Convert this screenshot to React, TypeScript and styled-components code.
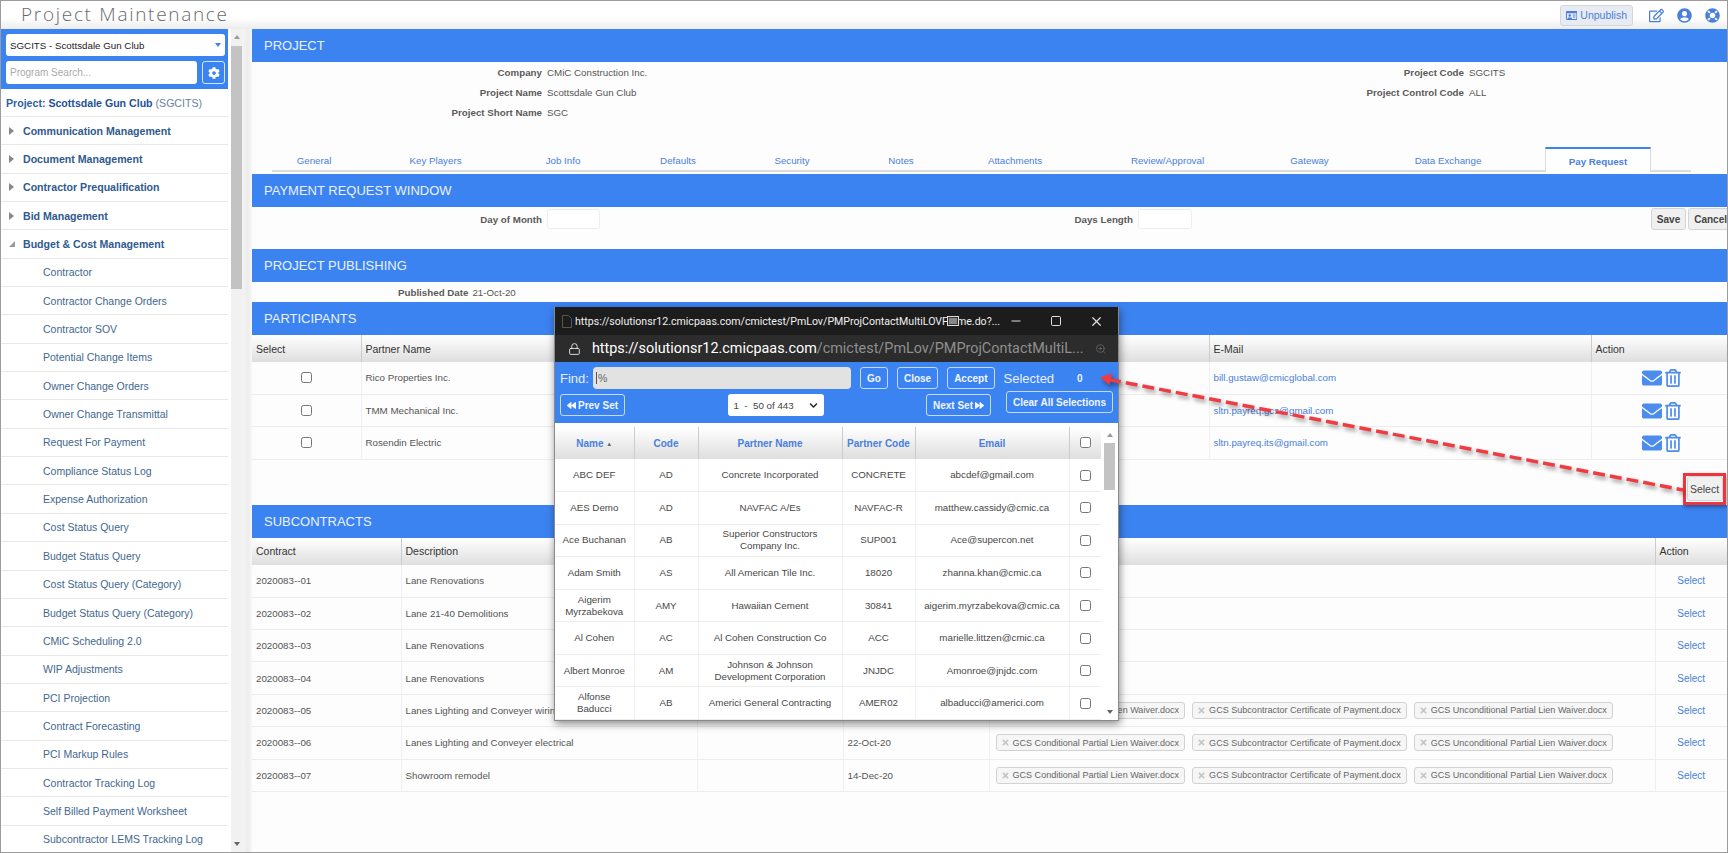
import * as React from 'react'
import styled, { createGlobalStyle } from 'styled-components'
import { FaCog, FaEnvelope, FaForward, FaBackward, FaLifeRing, FaRegEdit, FaRegIdCard, FaRegTrashAlt, FaTimes, FaUserCircle, FaChevronDown } from 'react-icons/fa'
import { Lock, Minus, Square, X, ZoomIn } from 'lucide-react'

const blue = '#3c83f2'
const link = '#4a80dc'

const Global = createGlobalStyle`
  html, body { margin: 0; padding: 0; background: #fff; }
  body { font-family: "Liberation Sans", Arial, sans-serif; font-size: 9.75px; color: #444; }
  * { box-sizing: border-box; }
`

const Page = styled.div`
  position: relative;
  width: 1728px;
  height: 853px;
  overflow: hidden;
  display: flex;
  flex-direction: column;
  border: 1px solid #9c9c9c;
  background: #fff;
`
const TopBar = styled.header`
  flex: 0 0 28px;
  display: flex;
  align-items: center;
  padding: 0 1px 0 20px;
  background: linear-gradient(#fff 60%, #ececec);
`
const Title = styled.h1`
  flex: 1;
  margin: 0 0 2px;
  font: 300 19px "Open Sans", sans-serif;
  letter-spacing: 1.7px;
  color: #6a6a6a;
`
const Unpublish = styled.button`
  display: flex;
  align-items: center;
  gap: 3px;
  width: 73px;
  height: 21px;
  margin-right: 9px;
  padding: 0 5px;
  border: 1px solid #d2d6de;
  border-radius: 3px;
  background: #e8ebf2;
  color: ${link};
  font: 10.5px "Liberation Sans", sans-serif;
`
const TopIcon = styled.span`
  display: flex;
  width: 28px;
  justify-content: center;
  color: ${link};
  font-size: 15px;
`
const Body = styled.div`
  flex: 1;
  display: flex;
  min-height: 0;
`
const Side = styled.aside`
  flex: 0 0 227px;
  display: flex;
  flex-direction: column;
  overflow: hidden;
`
const SideHead = styled.div`
  flex: 0 0 60px;
  display: flex;
  flex-direction: column;
  gap: 5px;
  padding: 5px 3px 0 5px;
  background: ${blue};
`
const ProjectSelect = styled.div`
  display: flex;
  align-items: center;
  justify-content: space-between;
  height: 22px;
  padding: 0 4px;
  border-radius: 3px;
  background: #fff;
  color: #222;
`
const Caret = styled.span`
  border-left: 3.5px solid transparent;
  border-right: 3.5px solid transparent;
  border-top: 4px solid ${blue};
`
const SearchRow = styled.div`
  display: flex;
  justify-content: space-between;
`
const Search = styled.input`
  width: 191px;
  height: 23px;
  padding: 0 4px;
  border: 0;
  border-radius: 3px;
  font: 10px "Liberation Sans", sans-serif;
  &::placeholder { color: #aaa; }
`
const Gear = styled.span`
  display: flex;
  align-items: center;
  justify-content: center;
  width: 23px;
  height: 23px;
  border: 1px solid #d5e4fc;
  border-radius: 3px;
  color: #fff;
  font-size: 12px;
`
const ProjectLine = styled.div`
  flex: 0 0 28px;
  padding: 8px 0 0 5px;
  border-bottom: 1px solid #e8e8e8;
  font-size: 10.6px;
  font-weight: bold;
  color: #2f5f9e;
  b { color: #1f5296; }
  span { color: #6b7f9c; font-weight: normal; }
`
const NavGroup = styled.div`
  flex: 0 0 28.35px;
  display: flex;
  align-items: center;
  gap: 8px;
  padding-left: 8px;
  border-bottom: 1px solid #e8e8e8;
  font-size: 10.6px;
  font-weight: bold;
  color: #2f5a90;
`
const Tri = styled.i<{ $open?: boolean }>`
  width: 0;
  height: 0;
  ${p => p.$open
    ? 'border-left: 6px solid transparent; border-bottom: 6px solid #999;'
    : 'border-left: 5px solid #888; border-top: 4px solid transparent; border-bottom: 4px solid transparent; margin-right: 1px;'}
`
const NavItem = styled.div`
  flex: 0 0 28.35px;
  display: flex;
  align-items: center;
  padding-left: 42px;
  border-bottom: 1px solid #e8e8e8;
  font-size: 10.5px;
  color: #3f678f;
`
const ScrollTrack = styled.div`
  flex: 0 0 14px;
  position: relative;
  padding: 17px 0 0 3px;
  background: linear-gradient(90deg, #fff 3px, #f1f1f1 3px);
`
const Thumb = styled.div`
  width: 11px;
  height: 243px;
  background: #c3c3c3;
`
const Arrow = styled.i<{ $down?: boolean; $x: number }>`
  position: absolute;
  left: ${p => p.$x}px;
  ${p => (p.$down ? 'bottom: 6px;' : 'top: 6px;')}
  border-left: 3.5px solid transparent;
  border-right: 3.5px solid transparent;
  ${p => (p.$down ? 'border-top: 4px solid #666;' : 'border-bottom: 4px solid #999;')}
`
const Gutter = styled.div`
  flex: 0 0 10px;
  background: linear-gradient(90deg, #f4f4f4, #ececec 60%, #f8f8f8);
`
const Main = styled.main`
  flex: 1;
  min-width: 0;
  overflow: hidden;
  background: #fdfdfd;
`
const Bar = styled.h2`
  height: 33px;
  margin: 0;
  padding: 0 12px;
  background: ${blue};
  color: #eaf2ff;
  font: 13px/33px "Liberation Sans", sans-serif;
  text-transform: uppercase;
`
const Form = styled.div`
  display: grid;
  grid-template-columns: 290px 622px 290px 1fr;
  grid-auto-rows: 20px;
  column-gap: 5px;
  align-items: center;
  height: 85px;
`
const Label = styled.span`
  text-align: right;
  font-weight: bold;
  color: #5a5a5a;
`
const Value = styled.span`
  color: #555;
`
const Tabs = styled.nav`
  display: grid;
  grid-template-columns: 84px 159px 96px 134px 94px 124px 104px 201px 83px 194px 106px;
  height: 25px;
  margin: 0 36px 2px 20px;
  border-bottom: 2px solid #dcdcdc;
`
const Tab = styled.a<{ $active?: boolean }>`
  display: flex;
  align-items: center;
  justify-content: center;
  height: 25px;
  padding-top: 2px;
  color: ${link};
  ${p => p.$active && `
    font-weight: bold;
    background: #fff;
    border: 1px solid #dcdcdc;
    border-top: 2px solid ${blue};
    border-bottom: 0;
  `}
`
const PayRow = styled.div`
  display: grid;
  grid-template-columns: 290px 53px 528px 54px 1fr;
  column-gap: 5px;
  align-items: center;
  height: 42px;
  padding-bottom: 18px;
`
const SmallInput = styled.div`
  height: 20px;
  border: 1px solid #eee;
  border-radius: 3px;
  background: #fff;
`
const Actions = styled.div`
  display: flex;
  justify-content: flex-end;
  gap: 2px;
  margin-right: -6px;
`
const GrayButton = styled.button`
  height: 22px;
  padding: 0 5px;
  border: 1px solid #d4d4d4;
  border-radius: 3px;
  background: #f0f0f0;
  color: #444;
  font: bold 10px "Liberation Sans", sans-serif;
`
const Published = styled.div`
  display: flex;
  align-items: center;
  gap: 4px;
  height: 20px;
  padding-left: 146px;
`
const Table = styled.table`
  width: 100%;
  table-layout: fixed;
  border-collapse: collapse;
  font-size: 9.75px;
  th {
    height: 27px;
    padding: 0 4px;
    text-align: left;
    font-weight: normal;
    font-size: 10.5px;
    color: #333;
    border-left: 1px solid #ccc;
    background: linear-gradient(#fff, #dedede);
    &:first-child { border-left: 0; }
  }
  td {
    height: 32.4px;
    padding: 0 4px;
    border-left: 1px solid #f0f0f0;
    border-bottom: 1px solid #ececec;
    color: #555;
    white-space: nowrap;
    &:first-child { border-left: 0; }
  }
`
const Mail = styled.a`
  color: ${link};
`
const Center = styled.div`
  display: flex;
  justify-content: center;
`
const IconPair = styled.div`
  display: flex;
  align-items: center;
  gap: 2px;
  padding-left: 46px;
  color: #4b8cec;
  font-size: 20px;
  svg + svg { font-size: 18px; }
`
const SelectStrip = styled.div`
  display: flex;
  justify-content: flex-end;
  height: 45px;
  padding: 13px 1px 0 0;
`
const RedFrame = styled.div`
  position: relative;
  z-index: 2;
  display: flex;
  align-items: center;
  justify-content: center;
  width: 43px;
  height: 32px;
  border: 3px solid #ee343c;
  box-shadow: 1px 2px 4px rgba(0, 0, 0, .4);
  background: #fff;
`
const SelectButton = styled(GrayButton)`
  width: 36px;
  height: 25px;
  padding: 0;
  font-weight: normal;
  font-size: 10.5px;
`
const Chips = styled.div`
  display: flex;
  gap: 7px;
  padding-left: 2px;
`
const Chip = styled.span`
  display: inline-flex;
  align-items: center;
  gap: 3px;
  height: 17px;
  padding: 0 5px 0 4px;
  border: 1px solid #d2d2d2;
  border-radius: 3px;
  background: #f6f6f6;
  color: #666;
  font-size: 9.05px;
  svg { color: #c6c6c6; font-size: 9px; }
`
const RowLink = styled.a`
  display: block;
  text-align: center;
  color: ${link};
  font-size: 10px;
`
const Popup = styled.section`
  position: absolute;
  z-index: 3;
  left: 553px;
  top: 306px;
  width: 565px;
  height: 414px;
  display: flex;
  flex-direction: column;
  border: 1px solid #8a8a8a;
  border-top: 0;
  background: #fff;
  box-shadow: 1px 3px 8px rgba(0, 0, 0, .45);
`
const TitleRow = styled.div`
  position: relative;
  flex: 0 0 28px;
  display: flex;
  align-items: center;
  padding-left: 7px;
  background: #1c1c1c;
  color: #f0f0f0;
  font: 10.6px Roboto, sans-serif;
`
const PageIcon = styled.svg`
  width: 10px;
  height: 13px;
  margin-right: 3px;
`
const Frag = styled.svg`
  position: absolute;
  left: 392px;
  top: 8px;
  width: 12px;
  height: 12px;
`
const WinButtons = styled.div`
  margin-left: auto;
  display: flex;
  align-items: center;
  gap: 27px;
  padding-right: 14px;
  color: #ddd;
`
const UrlRow = styled.div`
  flex: 0 0 27px;
  display: flex;
  align-items: center;
  gap: 11px;
  padding: 0 12px 0 13px;
  background: #2c2c2c;
  color: #fff;
  font: 14.4px Roboto, sans-serif;
  span span { color: #8f8f8f; }
  svg:last-child { margin-left: auto; color: #6c6c6c; }
`
const Toolbar = styled.div`
  flex: 0 0 61px;
  display: flex;
  flex-direction: column;
  gap: 5px;
  padding: 5px 5px 0 5px;
  background: ${blue};
  color: #e6f0ff;
`
const ToolRow = styled.div`
  display: flex;
  align-items: center;
  gap: 9px;
  height: 22px;
`
const ToolRowSpread = styled(ToolRow)`
  justify-content: space-between;
`
const ToolRight = styled.div`
  display: flex;
  align-items: flex-start;
  gap: 15px;
  margin-top: -3px;
`
const FindLabel = styled.span`
  margin-right: -5px;
  font-size: 13px;
`
const FindInput = styled.div`
  display: flex;
  align-items: center;
  gap: 1px;
  width: 258px;
  height: 22px;
  padding: 0 3px;
  border-radius: 4px;
  background: #e2e2e2;
  color: #666;
  font-size: 10.5px;
`
const TextCursor = styled.i`
  width: 1px;
  height: 12px;
  background: #555;
`
const ToolButton = styled.button`
  display: inline-flex;
  align-items: center;
  justify-content: center;
  gap: 2px;
  min-width: 28px;
  height: 22px;
  padding: 0 6px;
  border: 1px solid #c5dafb;
  border-radius: 3px;
  background: ${blue};
  color: #f0f6ff;
  font: bold 10px "Liberation Sans", sans-serif;
  svg { font-size: 9px; }
`
const SelectedText = styled.span`
  font-size: 13px;
`
const Zero = styled.b`
  margin-left: 14px;
  font-size: 10px;
`
const PageSelect = styled.div`
  display: flex;
  align-items: center;
  justify-content: space-between;
  width: 96px;
  height: 22px;
  padding: 0 6px;
  border-radius: 3px;
  background: #fff;
  color: #444;
  svg { font-size: 9px; color: #222; }
`
const PopBody = styled.div`
  flex: 1;
  display: flex;
  min-height: 0;
  padding-top: 4px;
`
const PopTable = styled(Table)`
  flex: 0 0 546px;
  width: 546px;
  th {
    height: 32px;
    padding: 0;
    text-align: center;
    font-weight: bold;
    font-size: 10px;
    color: ${link};
  }
  td {
    padding: 0 6px;
    text-align: center;
    white-space: normal;
    line-height: 12px;
    color: #484848;
  }
`
const Sort = styled.span`
  font-size: 6px;
  color: #666;
  vertical-align: 1px;
`
const PopScroll = styled.div`
  position: relative;
  flex: 1;
  padding: 16px 0 0 3px;
  background: #fff;
`
const PopThumb = styled.div`
  width: 11px;
  height: 47px;
  background: #c3c3c3;
`
const Pointer = styled.svg`
  position: absolute;
  z-index: 4;
  left: 1094px;
  top: 368px;
  width: 600px;
  height: 135px;
  filter: drop-shadow(2px 3px 2px rgba(0, 0, 0, .4));
`

const nav = ['Contractor', 'Contractor Change Orders', 'Contractor SOV', 'Potential Change Items', 'Owner Change Orders', 'Owner Change Transmittal', 'Request For Payment', 'Compliance Status Log', 'Expense Authorization', 'Cost Status Query', 'Budget Status Query', 'Cost Status Query (Category)', 'Budget Status Query (Category)', 'CMiC Scheduling 2.0', 'WIP Adjustments', 'PCI Projection', 'Contract Forecasting', 'PCI Markup Rules', 'Contractor Tracking Log', 'Self Billed Payment Worksheet', 'Subcontractor LEMS Tracking Log']
const groups = ['Communication Management', 'Document Management', 'Contractor Prequalification', 'Bid Management']
const tabs = ['General', 'Key Players', 'Job Info', 'Defaults', 'Security', 'Notes', 'Attachments', 'Review/Approval', 'Gateway', 'Data Exchange']
const participants = [
  ['Rico Properties Inc.', 'bill.gustaw@cmicglobal.com'],
  ['TMM Mechanical Inc.', 'sltn.payreq.gcs@gmail.com'],
  ['Rosendin Electric', 'sltn.payreq.its@gmail.com'],
]
const subcontracts = [
  ['2020083--01', 'Lane Renovations', '', false],
  ['2020083--02', 'Lane 21-40 Demolitions', '', false],
  ['2020083--03', 'Lane Renovations', '', false],
  ['2020083--04', 'Lane Renovations', '', false],
  ['2020083--05', 'Lanes Lighting and Conveyer wiring', '', true],
  ['2020083--06', 'Lanes Lighting and Conveyer electrical', '22-Oct-20', true],
  ['2020083--07', 'Showroom remodel', '14-Dec-20', true],
] as [string, string, string, boolean][]
const docs = ['GCS Conditional Partial Lien Waiver.docx', 'GCS Subcontractor Certificate of Payment.docx', 'GCS Unconditional Partial Lien Waiver.docx']
const contacts = [
  ['ABC DEF', 'AD', 'Concrete Incorporated', 'CONCRETE', 'abcdef@gmail.com'],
  ['AES Demo', 'AD', 'NAVFAC A/Es', 'NAVFAC-R', 'matthew.cassidy@cmic.ca'],
  ['Ace Buchanan', 'AB', 'Superior Constructors Company Inc.', 'SUP001', 'Ace@supercon.net'],
  ['Adam Smith', 'AS', 'All American Tile Inc.', '18020', 'zhanna.khan@cmic.ca'],
  ['Aigerim Myrzabekova', 'AMY', 'Hawaiian Cement', '30841', 'aigerim.myrzabekova@cmic.ca'],
  ['Al Cohen', 'AC', 'Al Cohen Construction Co', 'ACC', 'marielle.littzen@cmic.ca'],
  ['Albert Monroe', 'AM', 'Johnson & Johnson Development Corporation', 'JNJDC', 'Amonroe@jnjdc.com'],
  ['Alfonse Baducci', 'AB', 'Americi General Contracting', 'AMER02', 'albaducci@americi.com'],
]

const Check = () => <input type="checkbox" readOnly style={{ width: 11, height: 11, margin: 0 }} />

const Sidebar = () => (
  <Side>
    <SideHead>
      <ProjectSelect>SGCITS - Scottsdale Gun Club<Caret /></ProjectSelect>
      <SearchRow>
        <Search placeholder="Program Search..." />
        <Gear><FaCog /></Gear>
      </SearchRow>
    </SideHead>
    <ProjectLine>Project: <b>Scottsdale Gun Club</b> <span>(SGCITS)</span></ProjectLine>
    {groups.map(g => <NavGroup key={g}><Tri />{g}</NavGroup>)}
    <NavGroup><Tri $open />Budget &amp; Cost Management</NavGroup>
    {nav.map(n => <NavItem key={n}>{n}</NavItem>)}
  </Side>
)

const ContactWindow = () => (
  <Popup>
    <TitleRow>
      <PageIcon viewBox="0 0 10 13"><path d="M.5.5h6l3 3v9h-9z" fill="none" stroke="#555" /></PageIcon>
      https://solutionsr12.cmicpaas.com/cmictest/PmLov/PMProjContactMultiLOVFrame.do?...
      <Frag viewBox="0 0 12 12"><rect x=".5" y="1.5" width="11" height="9" fill="#333" stroke="#ddd" /><path d="M2 4h8M2 6h8M2 8h8" stroke="#ddd" /></Frag>
      <WinButtons><Minus size={14} /><Square size={12} /><X size={15} /></WinButtons>
    </TitleRow>
    <UrlRow>
      <Lock size={18} strokeWidth={1.5} />
      <span>https://solutionsr12.cmicpaas.com<span>/cmictest/PmLov/PMProjContactMultiL...</span></span>
      <ZoomIn size={16} strokeWidth={1.5} />
    </UrlRow>
    <Toolbar>
      <ToolRow>
        <FindLabel>Find:</FindLabel>
        <FindInput><TextCursor />%</FindInput>
        <ToolButton>Go</ToolButton>
        <ToolButton>Close</ToolButton>
        <ToolButton>Accept</ToolButton>
        <SelectedText>Selected</SelectedText>
        <Zero>0</Zero>
      </ToolRow>
      <ToolRowSpread>
        <ToolButton><FaBackward />Prev Set</ToolButton>
        <PageSelect>1 &nbsp;- &nbsp;50 of 443<FaChevronDown /></PageSelect>
        <ToolRight>
          <ToolButton style={{ marginTop: 3 }}>Next Set<FaForward /></ToolButton>
          <ToolButton>Clear All Selections</ToolButton>
        </ToolRight>
      </ToolRowSpread>
    </Toolbar>
    <PopBody>
      <PopTable as="table">
        <colgroup>
          <col width={79} /><col width={64} /><col width={144} /><col width={73} /><col width={154} /><col width={32} />
        </colgroup>
        <thead>
          <tr>
            <th>Name <Sort>▲</Sort></th><th>Code</th><th>Partner Name</th><th>Partner Code</th><th>Email</th><th><Check /></th>
          </tr>
        </thead>
        <tbody>
          {contacts.map(c => (
            <tr key={c[0]}>
              {c.map((v, i) => <td key={i}>{v}</td>)}
              <td><Center><Check /></Center></td>
            </tr>
          ))}
        </tbody>
      </PopTable>
      <PopScroll>
        <Arrow $x={6} />
        <PopThumb />
        <Arrow $x={6} $down />
      </PopScroll>
    </PopBody>
  </Popup>
)

const App = () => (
  <Page>
    <Global />
    <TopBar>
      <Title>Project Maintenance</Title>
      <Unpublish><FaRegIdCard size={13} />Unpublish</Unpublish>
      <TopIcon><FaRegEdit /></TopIcon>
      <TopIcon><FaUserCircle /></TopIcon>
      <TopIcon><FaLifeRing /></TopIcon>
    </TopBar>
    <Body>
      <Sidebar />
      <ScrollTrack>
        <Arrow $x={6} />
        <Thumb />
        <Arrow $x={6} $down />
      </ScrollTrack>
      <Gutter />
      <Main>
        <Bar>Project</Bar>
        <Form>
          <Label>Company</Label><Value>CMiC Construction Inc.</Value>
          <Label>Project Code</Label><Value>SGCITS</Value>
          <Label>Project Name</Label><Value>Scottsdale Gun Club</Value>
          <Label>Project Control Code</Label><Value>ALL</Value>
          <Label>Project Short Name</Label><Value>SGC</Value>
        </Form>
        <Tabs>
          {tabs.map(t => <Tab key={t}>{t}</Tab>)}
          <Tab $active>Pay Request</Tab>
        </Tabs>
        <Bar>Payment Request Window</Bar>
        <PayRow>
          <Label>Day of Month</Label>
          <SmallInput />
          <Label>Days Length</Label>
          <SmallInput />
          <Actions>
            <GrayButton>Save</GrayButton>
            <GrayButton>Cancel</GrayButton>
          </Actions>
        </PayRow>
        <Bar>Project Publishing</Bar>
        <Published><Label>Published Date</Label><Value>21-Oct-20</Value></Published>
        <Bar>Participants</Bar>
        <Table>
          <colgroup><col width={109} /><col width={848} /><col width={382} /><col /></colgroup>
          <thead><tr><th>Select</th><th>Partner Name</th><th>E-Mail</th><th>Action</th></tr></thead>
          <tbody>
            {participants.map(p => (
              <tr key={p[0]}>
                <td><Center><Check /></Center></td>
                <td>{p[0]}</td>
                <td><Mail>{p[1]}</Mail></td>
                <td><IconPair><FaEnvelope /><FaRegTrashAlt /></IconPair></td>
              </tr>
            ))}
          </tbody>
        </Table>
        <SelectStrip>
          <RedFrame><SelectButton>Select</SelectButton></RedFrame>
        </SelectStrip>
        <Bar>Subcontracts</Bar>
        <Table>
          <colgroup><col width={149} /><col width={296} /><col width={146} /><col width={146} /><col width={666} /><col /></colgroup>
          <thead><tr><th>Contract</th><th>Description</th><th /><th /><th /><th>Action</th></tr></thead>
          <tbody>
            {subcontracts.map(s => (
              <tr key={s[0]}>
                <td>{s[0]}</td>
                <td>{s[1]}</td>
                <td />
                <td>{s[2]}</td>
                <td>{s[3] && <Chips>{docs.map(d => <Chip key={d}><FaTimes />{d}</Chip>)}</Chips>}</td>
                <td><RowLink>Select</RowLink></td>
              </tr>
            ))}
          </tbody>
        </Table>
      </Main>
    </Body>
    <ContactWindow />
    <Pointer viewBox="0 0 600 135">
      <path d="M14 10.5 588 121" stroke="#ef3b42" strokeWidth="3.5" strokeDasharray="12 5" fill="none" />
      <path d="M5 8.5 17 4l-2.500 12z" fill="#ef3b42" />
    </Pointer>
  </Page>
)

export default App
